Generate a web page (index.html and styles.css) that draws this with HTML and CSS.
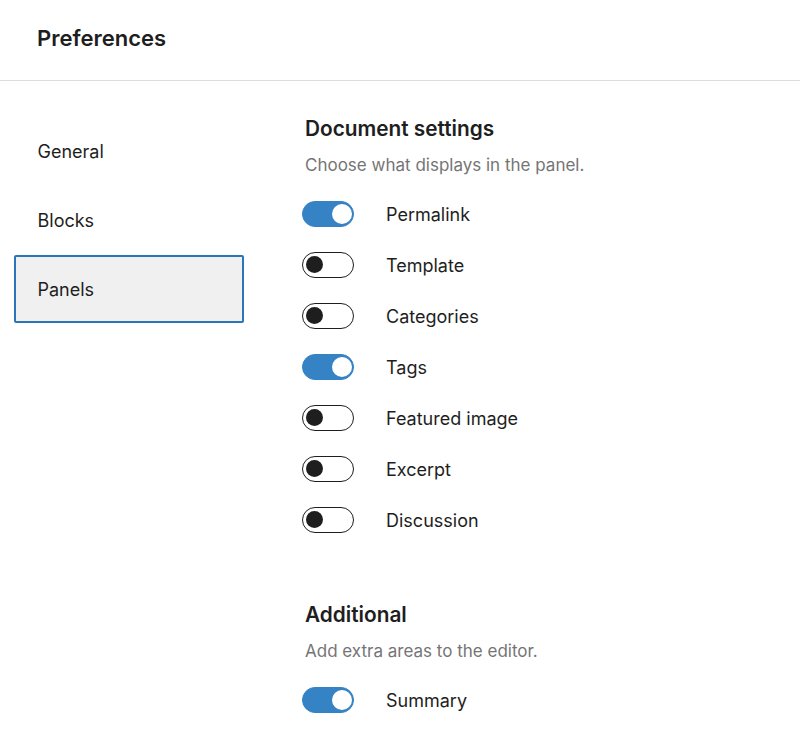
FILE: index.html
```html
<!DOCTYPE html>
<html lang="en">
<head>
<meta charset="utf-8">
<title>Preferences</title>
<link rel="stylesheet" href="styles.css">
</head>
<body>
<div class="modal">
  <header class="modal-header">
    <h1 class="modal-title">Preferences</h1>
  </header>
  <div class="modal-body">
    <nav class="tabs">
      <div class="tab">General</div>
      <div class="tab">Blocks</div>
      <div class="tab tab-active">Panels</div>
    </nav>
    <main class="content">
      <section class="section">
        <h2 class="section-title">Document settings</h2>
        <p class="section-desc">Choose what displays in the panel.</p>
        <div class="options">
          <label class="option"><span class="toggle is-on"><span class="knob"></span></span><span class="option-label">Permalink</span></label>
          <label class="option"><span class="toggle"><span class="knob"></span></span><span class="option-label">Template</span></label>
          <label class="option"><span class="toggle"><span class="knob"></span></span><span class="option-label">Categories</span></label>
          <label class="option"><span class="toggle is-on"><span class="knob"></span></span><span class="option-label">Tags</span></label>
          <label class="option"><span class="toggle"><span class="knob"></span></span><span class="option-label">Featured image</span></label>
          <label class="option"><span class="toggle"><span class="knob"></span></span><span class="option-label">Excerpt</span></label>
          <label class="option"><span class="toggle"><span class="knob"></span></span><span class="option-label">Discussion</span></label>
        </div>
      </section>
      <section class="section section-additional">
        <h2 class="section-title">Additional</h2>
        <p class="section-desc">Add extra areas to the editor.</p>
        <div class="options">
          <label class="option"><span class="toggle is-on"><span class="knob"></span></span><span class="option-label">Summary</span></label>
        </div>
      </section>
    </main>
  </div>
</div>
</body>
</html>
```

FILE: styles.css
```css
* { box-sizing: border-box; }
html, body {
  margin: 0;
  padding: 0;
  background: #fff;
}
body {
  font-family: Inter, "Noto Sans", "Liberation Sans", sans-serif;
  color: #1e1e1e;
  width: 800px;
  height: 732px;
  overflow: hidden;
}
.modal-header {
  height: 81px;
  border-bottom: 1px solid #dcdcde;
  display: flex;
  align-items: center;
  padding: 0 37px 5px;
}
.modal-title {
  margin: 0;
  font-size: 22px;
  font-weight: 600;
  line-height: 28px;
}
.modal-body {
  display: flex;
}
.tabs {
  width: 258px;
  flex: none;
  padding: 36px 0 0 14px;
  display: flex;
  flex-direction: column;
  gap: 1px;
}
.tab {
  width: 230px;
  height: 68px;
  display: flex;
  align-items: center;
  padding-left: 21.5px;
  font-size: 18px;
  border: 2px solid transparent;
  border-radius: 2px;
}
.tab-active {
  background: #f0f0f0;
  border-color: #2a76b8;
}
.content {
  flex: 1;
  padding: 36px 0 0 47px;
}
.section-title {
  margin: 0;
  font-size: 20.8px;
  font-weight: 600;
  line-height: 24px;
}
.section-desc {
  margin: 12px 0 0;
  font-size: 17px;
  line-height: 24px;
  color: #757575;
}
.options {
  margin-top: 24px;
  display: flex;
  flex-direction: column;
  gap: 25px;
}
.option {
  display: flex;
  align-items: center;
  height: 26px;
  margin-left: -3px;
}
.option-label {
  margin-left: 32px;
  font-size: 18px;
}
.toggle {
  position: relative;
  width: 52px;
  height: 26px;
  border-radius: 13px;
  border: 1.5px solid #1e1e1e;
  background: #fff;
  flex: none;
}
.toggle .knob {
  position: absolute;
  left: 3px;
  top: 3px;
  width: 17px;
  height: 17px;
  border-radius: 50%;
  background: #1e1e1e;
}
.toggle.is-on {
  background: #3582c4;
  border-color: #3582c4;
}
.toggle.is-on .knob {
  left: auto;
  right: 1.5px;
  top: 1.5px;
  width: 20px;
  height: 20px;
  background: #fff;
}
.section-additional {
  margin-top: 70px;
}
```
